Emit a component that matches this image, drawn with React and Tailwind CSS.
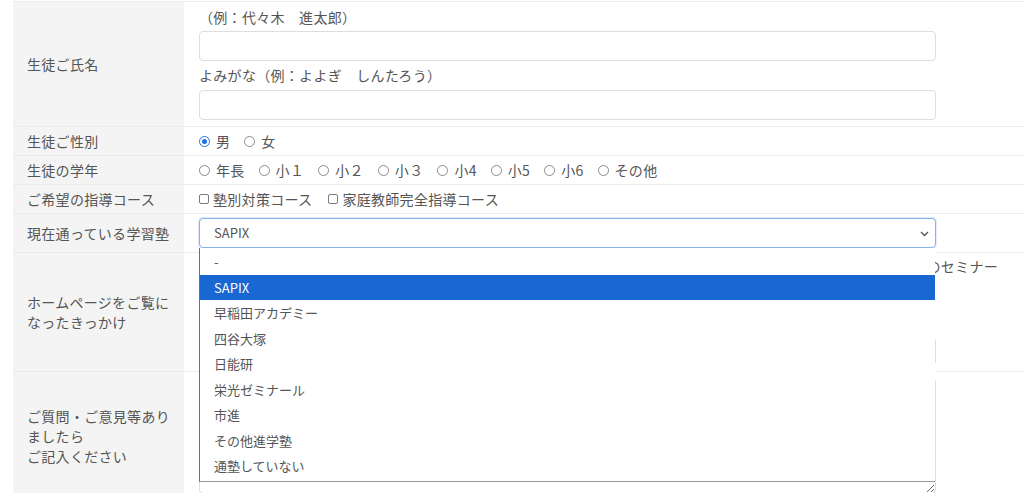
import { useState } from "react";

const schools = [
  "-",
  "SAPIX",
  "早稲田アカデミー",
  "四谷大塚",
  "日能研",
  "栄光ゼミナール",
  "市進",
  "その他進学塾",
  "通塾していない",
];

const grades = ["年長", "小１", "小２", "小３", "小4", "小5", "小6", "その他"];

function Radio({ checked }) {
  return checked ? (
    <span className="inline-flex h-[11px] w-[11px] items-center justify-center rounded-full border-[1.5px] border-[#1a73e8] bg-white">
      <span className="h-[5px] w-[5px] rounded-full bg-[#1a73e8]"></span>
    </span>
  ) : (
    <span className="inline-block h-[11px] w-[11px] rounded-full border border-[#8a8a8a] bg-white"></span>
  );
}

function Check() {
  return <span className="inline-block h-[10px] w-[10px] rounded-[2px] border border-[#7a7a7a] bg-white"></span>;
}

function Row({ label, children, className = "" }) {
  return (
    <div className="flex border-b border-[#ebebeb]">
      <div className="flex w-[171px] shrink-0 items-center bg-[#f4f4f4] px-[14px] text-[14px] leading-5">
        <div>{label}</div>
      </div>
      <div className={"flex-1 pl-[15px] " + className}>{children}</div>
    </div>
  );
}

export default function App() {
  const [open] = useState(true);

  return (
    <div className="min-h-screen bg-white pl-[13px] pt-px font-['Noto_Sans_CJK_JP','Liberation_Sans',sans-serif] tracking-[0.3px] text-[#555]">
      <div className="border-t border-[#ebebeb]">
        <Row label="生徒ご氏名" className="pt-[5px] pb-[6px] text-[14px]">
          <div className="leading-5">（例：代々木　進太郎）</div>
          <input className="mt-[4px] block h-[30px] w-[737px] rounded-[4px] border border-[#dedede] bg-white px-3 outline-none" />
          <div className="mt-[4px] leading-5">よみがな（例：よよぎ　しんたろう）</div>
          <input className="mt-[5px] block h-[30px] w-[737px] rounded-[4px] border border-[#dedede] bg-white px-3 outline-none" />
        </Row>

        <Row label="生徒ご性別" className="flex h-[28px] items-center text-[14px] leading-5">
          <label className="mr-[14px] flex items-center gap-[6px]">
            <Radio checked />
            <span>男</span>
          </label>
          <label className="flex items-center gap-[6px]">
            <Radio />
            <span>女</span>
          </label>
        </Row>

        <Row label="生徒の学年" className="flex h-[28px] items-center text-[14px] leading-5">
          {grades.map((g) => (
            <label key={g} className="mr-[14px] flex items-center gap-[6px]">
              <Radio />
              <span>{g}</span>
            </label>
          ))}
        </Row>

        <Row label="ご希望の指導コース" className="flex h-[28px] items-center text-[14px] leading-5">
          <label className="mr-[16px] flex items-center gap-[4px]">
            <Check />
            <span>塾別対策コース</span>
          </label>
          <label className="flex items-center gap-[4px]">
            <Check />
            <span>家庭教師完全指導コース</span>
          </label>
        </Row>

        <Row label="現在通っている学習塾" className="relative py-[4px]">
          <div className="relative z-20 w-[737px] tracking-normal">
            <div className="flex h-[30px] items-center rounded-[4px] border border-[#86b1ec] bg-white pl-[14px] text-[13px] shadow-[0_0_0_1px_rgba(134,177,236,0.25)]">
              SAPIX
            </div>
            <svg className="absolute right-[7px] top-[13px]" width="9" height="6" viewBox="0 0 9 6">
              <path d="M1 1l3.5 3.5L8 1" fill="none" stroke="#555" strokeWidth="1.3" />
            </svg>
            {open && (
              <ul className="absolute left-0 top-full w-[736px] border-b border-l border-[#6e6e6e] border-b-[#9a9a9a] bg-white pt-px pb-[2px] text-[13px]">
                {schools.map((s, i) => (
                  <li
                    key={s}
                    className={
                      "flex h-[25.5px] items-center pl-[14px] " +
                      (i === 1 ? "bg-[#1967d2] text-white" : "")
                    }
                  >
                    {s}
                  </li>
                ))}
              </ul>
            )}
          </div>
        </Row>

        <Row
          label={
            <>
              ホームページをご覧に
              <br />
              なったきっかけ
            </>
          }
          className="pt-[3px] pb-[6px] text-[14px] leading-5"
        >
          <div className="flex w-[799px] justify-end gap-[16px] whitespace-nowrap">
            <span className="flex items-center gap-[4px]">
              <Check />
              当塾のセミナー
            </span>
          </div>
          <input className="mt-[61px] block h-[28px] w-[737px] rounded-[4px] border border-[#dedede] bg-white outline-none" />
        </Row>

        <Row
          label={
            <>
              ご質問・ご意見等あり
              <br />
              ましたら
              <br />
              ご記入ください
            </>
          }
          className="pt-[6px] pb-[5px]"
        >
          <textarea className="block h-[116px] w-[737px] rounded-[4px] border border-[#dedede] bg-white outline-none"></textarea>
        </Row>
      </div>
    </div>
  );
}
